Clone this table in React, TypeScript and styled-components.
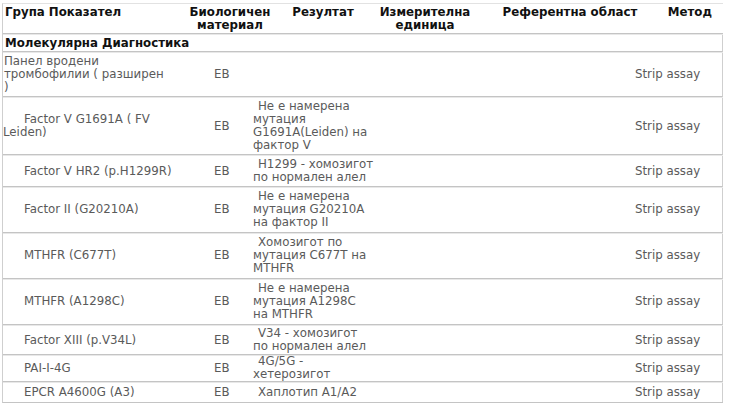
import React from "react";
import styled, { createGlobalStyle } from "styled-components";

const GlobalStyle = createGlobalStyle`
  html, body {
    margin: 0;
    padding: 0;
    background: #ffffff;
  }
  body {
    font-family: "DejaVu Sans", Verdana, sans-serif;
    font-size: 11.8px;
    color: #5a5a5a;
  }
`;

const HEAD_COLS = "184px 84px 102px 102px 188px 60px";
const BODY_COLS = "186px 62px 130px 86px 166px 90px";

const Page = styled.div`
  padding: 3px 0 0 2px;
`;

const Table = styled.div`
  width: 720px;
  border-left: 1px solid #cfcfcf;
  border-top: 1px solid #e2e2e2;
  border-bottom: 1px solid #c4c4c4;
  box-shadow: 0 1px 0 #e4e4e4;
`;

const HeadRow = styled.div`
  display: grid;
  grid-template-columns: ${HEAD_COLS};
  align-items: start;
  padding: 2px 0 1px;
  line-height: 13px;
  border-bottom: 1px solid #c4c4c4;
  box-shadow: 0 1px 0 #e8e8e8;
`;

const HeadCell = styled.div<{ $align?: "left" | "center" | "right"; $pr?: number }>`
  font-weight: bold;
  color: #111;
  white-space: nowrap;
  text-align: ${(p) => p.$align ?? "center"};
  padding: 0 ${(p) => p.$pr ?? 0}px 0 2px;
`;

const GroupRow = styled.div`
  margin-top: 1px;
  padding: 2px 2px 1px;
  line-height: 13px;
  font-weight: bold;
  color: #111;
  border-right: 1px solid #cfcfcf;
  border-bottom: 1px solid #c4c4c4;
  box-shadow: 0 1px 0 #e8e8e8;
`;

const Row = styled.div<{ $last?: boolean; $pad: [number, number] }>`
  display: grid;
  grid-template-columns: ${BODY_COLS};
  align-items: center;
  margin-top: ${(p) => (p.$pad[0] === 0 ? 0 : 1)}px;
  padding: ${(p) => p.$pad[0]}px 0 ${(p) => p.$pad[1]}px;
  line-height: 13px;
  border-right: 1px solid #cfcfcf;
  border-bottom: ${(p) => (p.$last ? "none" : "1px solid #c4c4c4")};
  box-shadow: ${(p) => (p.$last ? "none" : "0 1px 0 #e8e8e8")};
`;

const NameCell = styled.div<{ $indent?: boolean }>`
  white-space: nowrap;
  padding-left: ${(p) => (p.$indent ? 0 : 1)}px;
  text-indent: ${(p) => (p.$indent ? 21 : 0)}px;
`;

const MaterialCell = styled.div`
  padding-left: 25px;
`;

const ResultCell = styled.div`
  padding-left: 2px;
  white-space: nowrap;
`;

const ResultLine = styled.span<{ $first?: boolean }>`
  display: block;
  padding-left: ${(p) => (p.$first ? 5 : 0)}px;
`;

const MethodCell = styled.div`
  padding-left: 2px;
  white-space: nowrap;
`;

type Item = {
  name: string[];
  indent: boolean;
  result: string[];
  pad?: [number, number];
};

const items: Item[] = [
  {
    name: ["Панел вродени", "тромбофилии ( разширен", ")"],
    indent: false,
    result: [],
  },
  {
    name: ["Factor V G1691A ( FV", "Leiden)"],
    indent: true,
    result: ["Не е намерена", "мутация", "G1691A(Leiden) на", "фактор V"],
  },
  {
    name: ["Factor V HR2 (p.H1299R)"],
    indent: true,
    result: ["H1299 - хомозигот", "по нормален алел"],
  },
  {
    name: ["Factor II (G20210A)"],
    indent: true,
    result: ["Не е намерена", "мутация G20210A", "на фактор II"],
    pad: [2, 3],
  },
  {
    name: ["MTHFR (C677T)"],
    indent: true,
    result: ["Хомозигот по", "мутация C677T на", "MTHFR"],
    pad: [2, 3],
  },
  {
    name: ["MTHFR (A1298C)"],
    indent: true,
    result: ["Не е намерена", "мутация A1298C", "на MTHFR"],
    pad: [2, 3],
  },
  {
    name: ["Factor XIII (p.V34L)"],
    indent: true,
    result: ["V34 - хомозигот", "по нормален алел"],
    pad: [1, 1],
  },
  {
    name: ["PAI-I-4G"],
    indent: true,
    result: ["4G/5G -", "хетерозигот"],
    pad: [0, 0],
  },
  {
    name: ["EPCR A4600G (A3)"],
    indent: true,
    result: ["Хаплотип A1/A2"],
    pad: [3, 3],
  },
];

const Lines = ({ lines }: { lines: string[] }) => (
  <>
    {lines.map((l, i) => (
      <React.Fragment key={i}>
        {i > 0 && <br />}
        {l}
      </React.Fragment>
    ))}
  </>
);

export default function App() {
  return (
    <Page>
      <GlobalStyle />
      <Table>
        <HeadRow>
          <HeadCell $align="left">Група Показател</HeadCell>
          <HeadCell>
            Биологичен
            <br />
            материал
          </HeadCell>
          <HeadCell>Резултат</HeadCell>
          <HeadCell>
            Измерителна
            <br />
            единица
          </HeadCell>
          <HeadCell>Референтна област</HeadCell>
          <HeadCell $align="right" $pr={11}>
            Метод
          </HeadCell>
        </HeadRow>
        <GroupRow>Молекулярна Диагностика</GroupRow>
        {items.map((it, i) => (
          <Row key={i} $last={i === items.length - 1} $pad={it.pad ?? [2, 2]}>
            <NameCell $indent={it.indent}>
              <Lines lines={it.name} />
            </NameCell>
            <MaterialCell>EB</MaterialCell>
            <ResultCell>
              {it.result.map((r, j) => (
                <ResultLine key={j} $first={j === 0}>
                  {r}
                </ResultLine>
              ))}
            </ResultCell>
            <div />
            <div />
            <MethodCell>Strip assay</MethodCell>
          </Row>
        ))}
      </Table>
    </Page>
  );
}
